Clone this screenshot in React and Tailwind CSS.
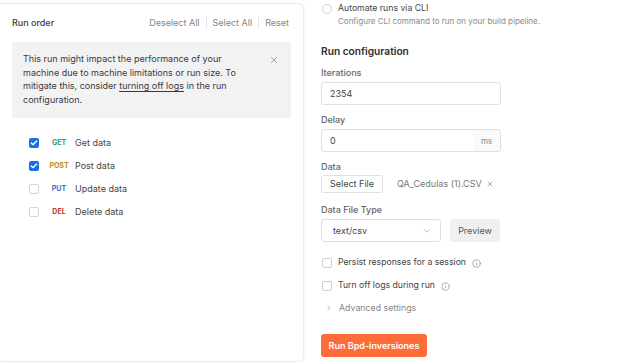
import { X, ChevronDown, ChevronRight, Info, Check } from 'lucide-react';

const requests = [
  { method: 'GET', name: 'Get data', color: 'text-[#2f9e5b]', checked: true },
  { method: 'POST', name: 'Post data', color: 'text-[#b98a1c]', checked: true },
  { method: 'PUT', name: 'Update data', color: 'text-[#3b6fd1]', checked: false },
  { method: 'DEL', name: 'Delete data', color: 'text-[#b23a2e]', checked: false },
];

function Box({ checked }) {
  return checked ? (
    <span className="flex h-[10px] w-[10px] items-center justify-center rounded-[2px] bg-[#1a6fe0]">
      <Check size={8} strokeWidth={4} className="text-white" />
    </span>
  ) : (
    <span className="h-[10px] w-[10px] rounded-[2px] border border-[#d4d4d4] bg-white" />
  );
}

export default function App() {
  return (
    <div className="flex h-[364px] w-[624px] overflow-hidden bg-white font-['Inter',sans-serif] text-[#3a3a3a]">
      <section className="mt-[3px] h-[359px] w-[304px] shrink-0 rounded-r-md border border-l-0 border-[#ececec] bg-white shadow-[1px_0_2px_rgba(0,0,0,0.03)]">
        <div className="flex items-center justify-between pl-3 pr-[14px] pt-[13px] text-[9px] leading-[12px]">
          <span className="font-medium text-[#3d3d3d]">Run order</span>
          <div className="flex items-center text-[#858585]">
            <span>Deselect All</span>
            <span className="mx-[6px] h-[12px] w-px bg-[#e6e6e6]" />
            <span>Select All</span>
            <span className="mx-[6px] h-[12px] w-px bg-[#e6e6e6]" />
            <span>Reset</span>
          </div>
        </div>

        <div className="mx-3 mt-[13px] flex h-[76px] rounded-[3px] bg-[#f2f2f2] pl-[11px] pr-[12px] pt-[10px]">
          <p className="w-[232px] text-[9px] leading-[13.5px] text-[#3a3a3a]">
            This run might impact the performance of your machine due to machine limitations or run size. To mitigate this, consider{' '}
            <span className="underline underline-offset-2">turning off logs</span> in the run configuration.
          </p>
          <X size={10} strokeWidth={1.3} className="ml-auto mt-[3px] text-[#6b6b6b]" />
        </div>

        <div className="mt-[20px] flex flex-col gap-[13px] pl-[29px]">
          {requests.map((r) => (
            <div key={r.method} className="flex h-[10px] items-center">
              <Box checked={r.checked} />
              <span className={`ml-[4px] w-[32px] text-center text-[7px] font-bold ${r.color}`}>{r.method}</span>
              <span className="text-[9px] text-[#444]">{r.name}</span>
            </div>
          ))}
        </div>
      </section>

      <section className="flex flex-col pl-[17px] pt-[3px] text-[#3a3a3a]">
        <div className="flex h-[12px] items-center">
          <span className="ml-[1px] h-[10px] w-[10px] rounded-full border border-[#cfcfcf]" />
          <span className="ml-[6px] text-[8.7px] text-[#444]">Automate runs via CLI</span>
        </div>
        <span className="ml-[17px] text-[8px] leading-[12px] text-[#8a8a8a]">Configure CLI command to run on your build pipeline.</span>

        <h2 className="mt-[16px] text-[10.2px] font-semibold leading-[16px] text-[#2e2e2e]">Run configuration</h2>

        <label className="mt-[8px] text-[9px] font-medium leading-[12px] text-[#666]">Iterations</label>
        <div className="mt-[3px] flex h-[23px] w-[180px] items-center rounded-[3px] border border-[#e0e0e0] px-[8px] text-[9px] text-[#444]">2354</div>

        <label className="mt-[9px] text-[9px] font-medium leading-[12px] text-[#666]">Delay</label>
        <div className="mt-[3px] flex h-[23px] w-[180px] items-center overflow-hidden rounded-[3px] border border-[#e0e0e0] text-[9px] text-[#444]">
          <span className="flex-1 px-[8px]">0</span>
          <span className="flex h-full w-[27px] items-center justify-center bg-[#fafafa] text-[8px] text-[#888]">ms</span>
        </div>

        <label className="mt-[9px] text-[9px] font-medium leading-[12px] text-[#666]">Data</label>
        <div className="mt-[2px] flex items-center">
          <span className="flex h-[18px] w-[62px] items-center justify-center rounded-[3px] border border-[#e0e0e0] text-[9px] text-[#444]">Select File</span>
          <span className="ml-[14px] text-[9px] text-[#777]">QA_Cedulas (1).CSV</span>
          <X size={8} strokeWidth={1.8} className="ml-[4px] text-[#777]" />
        </div>

        <label className="mt-[11px] text-[9px] font-medium leading-[12px] text-[#666]">Data File Type</label>
        <div className="mt-[3px] flex items-center">
          <div className="flex h-[23px] w-[120px] items-center rounded-[3px] border border-[#e0e0e0] pl-[11px] pr-[8px] text-[9px] text-[#444]">
            <span className="flex-1">text/csv</span>
            <ChevronDown size={10} strokeWidth={1.3} className="text-[#777]" />
          </div>
          <span className="ml-[9px] flex h-[23px] w-[50px] items-center justify-center rounded-[3px] bg-[#f0f0f0] text-[9px] text-[#555]">Preview</span>
        </div>

        <div className="mt-[15px] flex h-[12px] items-center">
          <span className="ml-[1px] h-[10px] w-[10px] rounded-[2px] border border-[#cfcfcf]" />
          <span className="ml-[6px] text-[8.7px] text-[#444]">Persist responses for a session</span>
          <Info size={9} strokeWidth={1.5} className="ml-[6px] text-[#777]" />
        </div>
        <div className="mt-[11px] flex h-[12px] items-center">
          <span className="ml-[1px] h-[10px] w-[10px] rounded-[2px] border border-[#cfcfcf]" />
          <span className="ml-[6px] text-[8.7px] text-[#444]">Turn off logs during run</span>
          <Info size={9} strokeWidth={1.5} className="ml-[6px] text-[#777]" />
        </div>

        <div className="mt-[10px] flex h-[12px] items-center">
          <ChevronRight size={8} strokeWidth={1.6} className="ml-[4px] text-[#777]" />
          <span className="ml-[6px] text-[8.8px] text-[#888]">Advanced settings</span>
        </div>

        <button className="mt-[20px] flex h-[23px] w-[106px] items-center justify-center rounded-[3px] bg-[#ff6c37] text-[9px] font-semibold text-white">
          Run Bpd-inversiones
        </button>
      </section>
    </div>
  );
}
